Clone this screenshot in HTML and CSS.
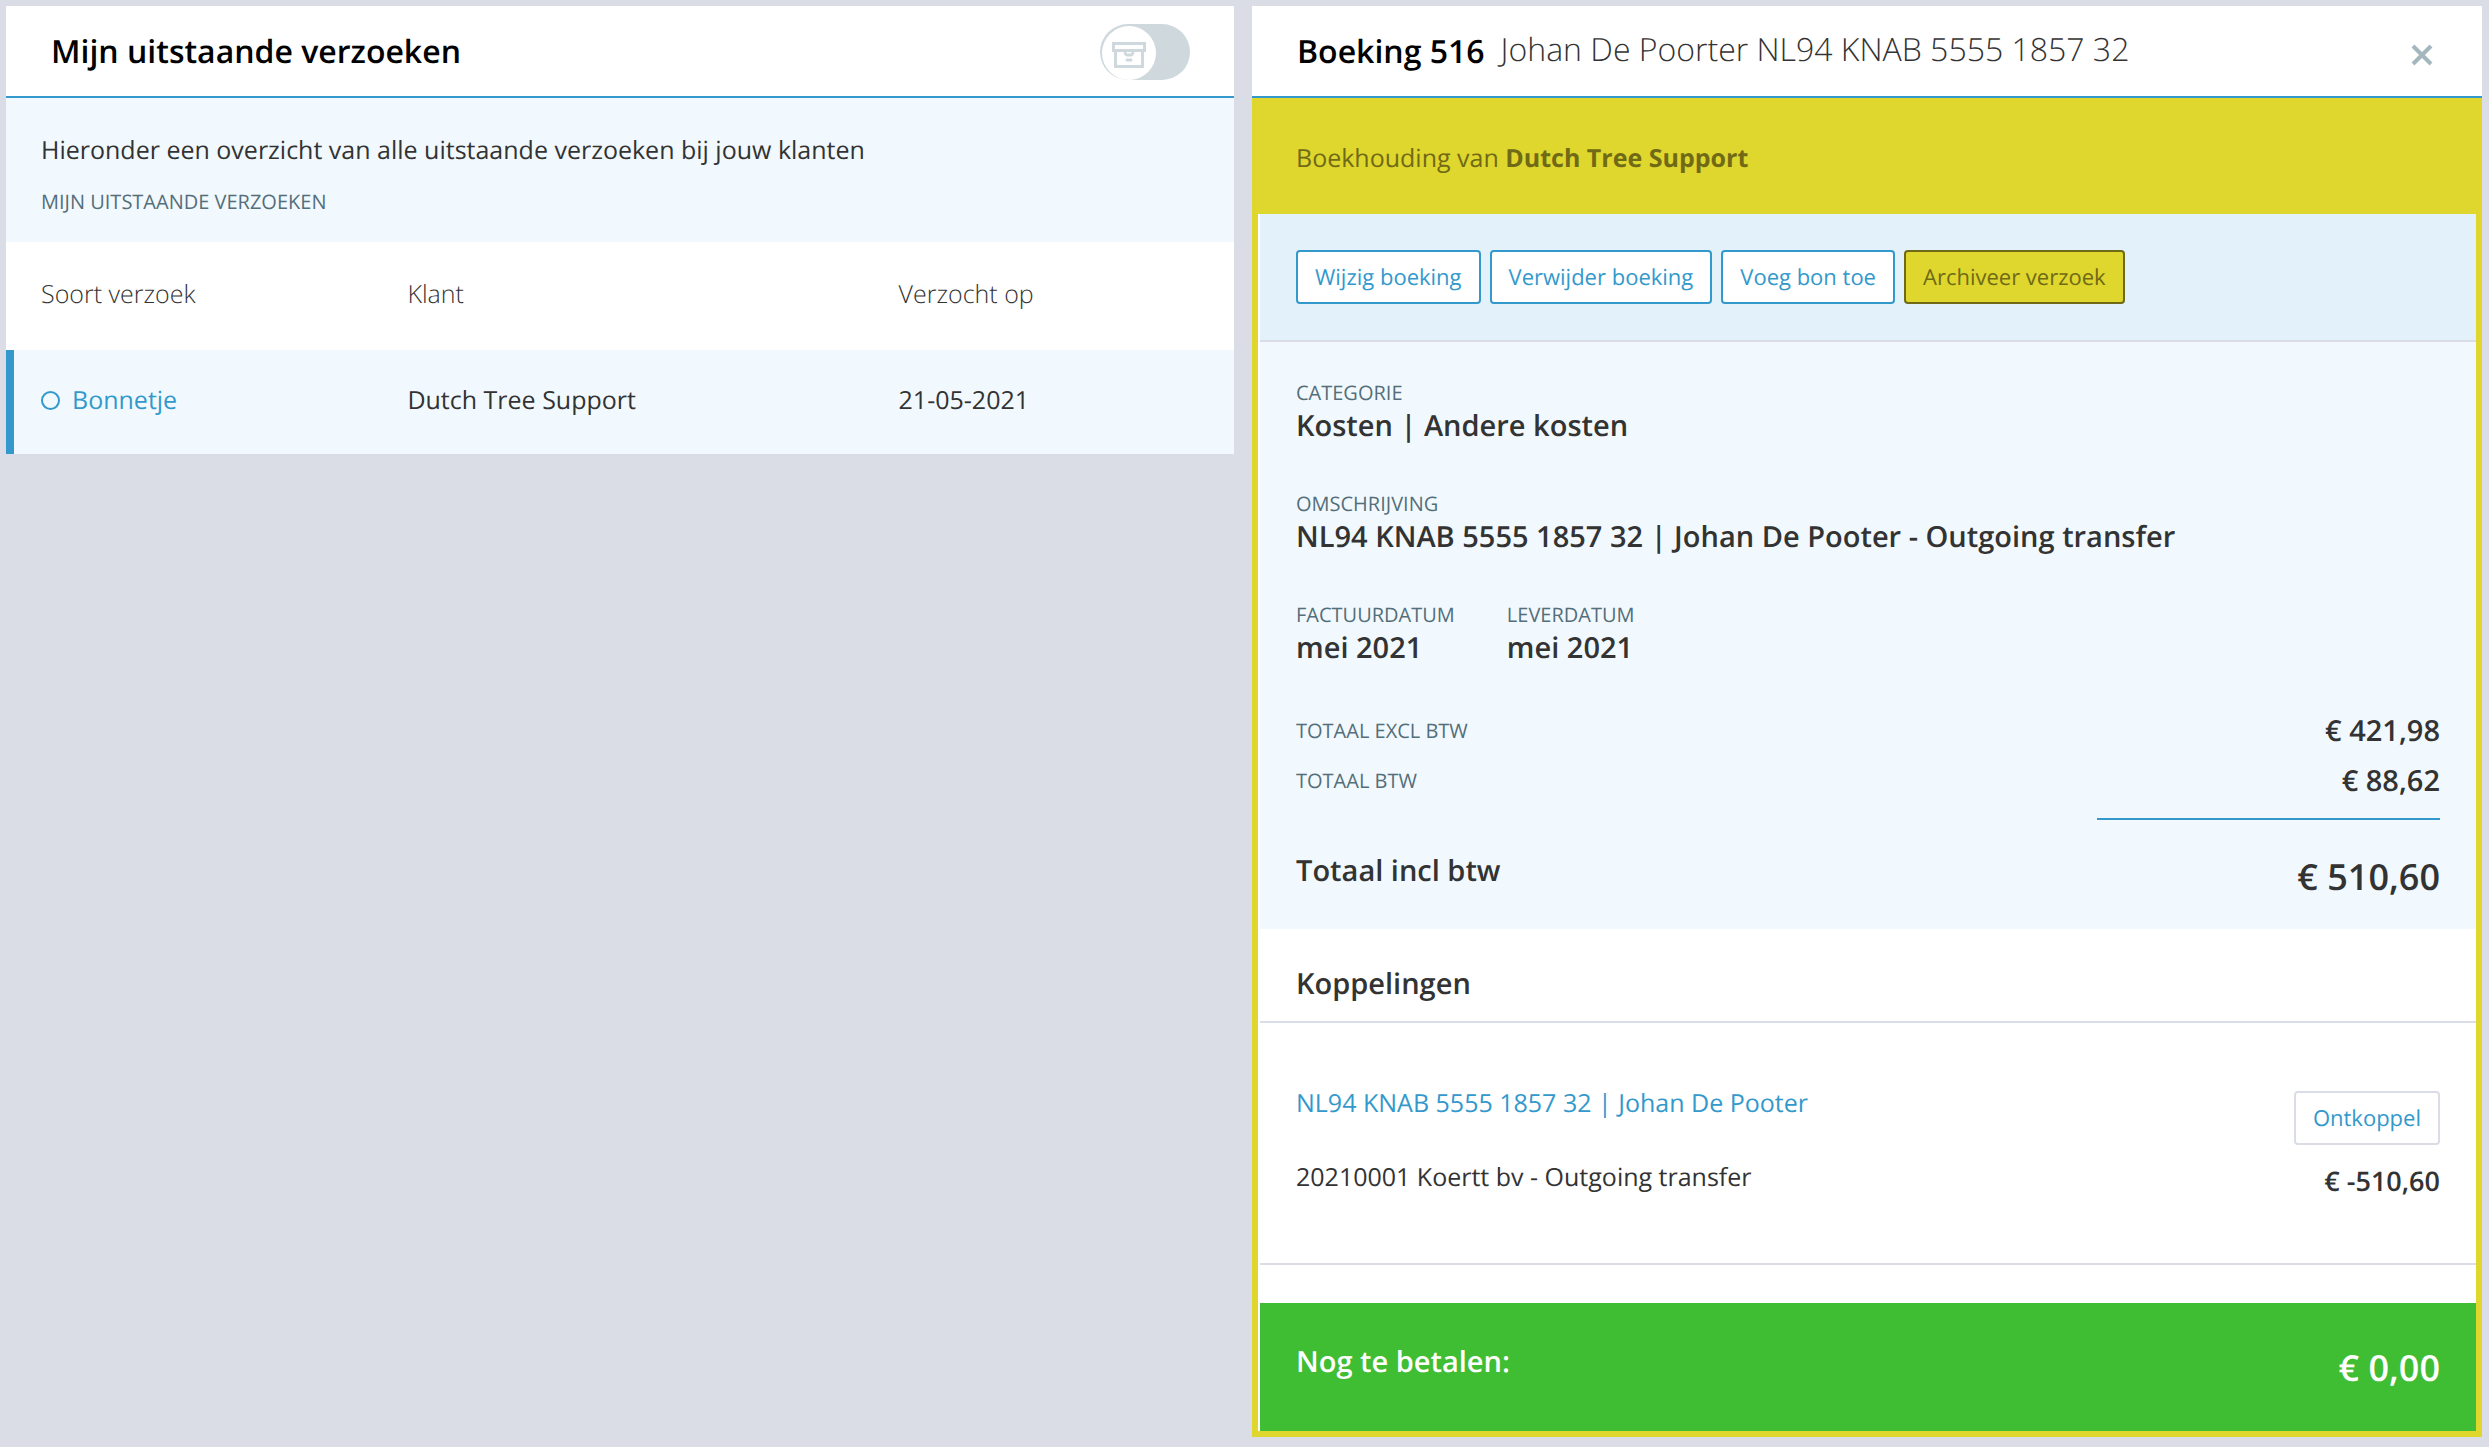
FILE: index.html
```html
<!DOCTYPE html>
<html lang="nl">
<head>
<meta charset="utf-8">
<meta name="viewport" content="width=device-width, initial-scale=1">
<title>Mijn uitstaande verzoeken</title>
<link rel="stylesheet" href="styles.css">
</head>
<body>
<main class="layout">
  <section class="panel">
    <header class="panel-header">
      <h1 class="panel-title">Mijn uitstaande verzoeken</h1>
      <label class="toggle">
        <input class="toggle-input" type="checkbox" aria-label="Toon archief">
        <span class="toggle-knob">
          <svg class="toggle-icon" viewBox="0 0 34 26" aria-hidden="true">
            <g fill="none" stroke="currentColor" stroke-width="3">
              <rect x="1.500" y="1.500" width="31" height="7"/>
              <path d="M3.500 9v15.500h27V9"/>
              <path d="M12 9.500c1 0 1 3.500 3 3.500h4c2 0 2-3.500 3-3.500"/>
              <path d="M15 18h4" stroke-linecap="round"/>
            </g>
          </svg>
        </span>
      </label>
    </header>
    <div class="intro">
      <p class="intro-text">Hieronder een overzicht van alle uitstaande verzoeken bij jouw klanten</p>
      <p class="label">MIJN UITSTAANDE VERZOEKEN</p>
    </div>
    <table class="requests">
      <thead>
        <tr>
          <th class="col-type">Soort verzoek</th>
          <th class="col-client">Klant</th>
          <th>Verzocht op</th>
        </tr>
      </thead>
      <tbody>
        <tr class="selected">
          <td><a class="request-link" href="#bonnetje"><span class="ring"></span>Bonnetje</a></td>
          <td>Dutch Tree Support</td>
          <td>21-05-2021</td>
        </tr>
      </tbody>
    </table>
  </section>

  <section class="panel">
    <header class="panel-header">
      <div class="heading">
        <h2 class="panel-title">Boeking 516</h2>
        <span class="panel-subtitle">Johan De Poorter NL94 KNAB 5555 1857 32</span>
      </div>
      <button class="close" type="button" aria-label="Sluiten">
        <svg class="close-icon" viewBox="0 0 22 22" aria-hidden="true">
          <path d="M2 2l18 18M20 2L2 20" fill="none" stroke="currentColor" stroke-width="4"/>
        </svg>
      </button>
    </header>
    <p class="banner">Boekhouding van <strong>Dutch Tree Support</strong></p>
    <div class="booking">
      <div class="toolbar">
        <button class="button" type="button">Wijzig boeking</button>
        <button class="button" type="button">Verwijder boeking</button>
        <button class="button" type="button">Voeg bon toe</button>
        <button class="button button-archive" type="button">Archiveer verzoek</button>
      </div>
      <div class="details">
        <div class="field">
          <p class="label">CATEGORIE</p>
          <p class="value">Kosten | Andere kosten</p>
        </div>
        <div class="field">
          <p class="label">OMSCHRIJVING</p>
          <p class="value">NL94 KNAB 5555 1857 32 | Johan De Pooter - Outgoing transfer</p>
        </div>
        <div class="dates">
          <div class="field">
            <p class="label">FACTUURDATUM</p>
            <p class="value">mei 2021</p>
          </div>
          <div class="field">
            <p class="label">LEVERDATUM</p>
            <p class="value">mei 2021</p>
          </div>
        </div>
        <div class="totals">
          <div class="total-row">
            <span class="label">TOTAAL EXCL BTW</span>
            <span class="value">€ 421,98</span>
          </div>
          <div class="total-row">
            <span class="label">TOTAAL BTW</span>
            <span class="value">€ 88,62</span>
          </div>
          <hr class="sum-line">
          <div class="grand-row">
            <span class="value">Totaal incl btw</span>
            <span class="grand-amount">€ 510,60</span>
          </div>
        </div>
      </div>
      <h3 class="links-title">Koppelingen</h3>
      <div class="link-item">
        <div class="link-text">
          <a class="link" href="#rekening">NL94 KNAB 5555 1857 32 | Johan De Pooter</a>
          <p>20210001 Koertt bv - Outgoing transfer</p>
        </div>
        <div class="link-side">
          <button class="button button-quiet" type="button">Ontkoppel</button>
          <span class="link-amount">€ -510,60</span>
        </div>
      </div>
      <footer class="due">
        <span class="due-label">Nog te betalen:</span>
        <span class="grand-amount">€ 0,00</span>
      </footer>
    </div>
  </section>
</main>
</body>
</html>
```
FILE: styles.css
```css
* {
  box-sizing: border-box;
}

body {
  margin: 0;
  background: #dadde6;
  color: #333;
  font: 400 25px/36px "Open Sans", sans-serif;
  text-rendering: geometricPrecision;
}

h1, h2, h3, p {
  margin: 0;
}

a {
  color: #3399cc;
  text-decoration: none;
}

.layout {
  display: grid;
  grid-template-columns: 1228fr 1230fr;
  gap: 18px;
  align-items: start;
  padding: 6px 7px 6px 6px;
}

.panel {
  background: #fff;
}

.panel-header {
  display: flex;
  align-items: center;
  justify-content: space-between;
  height: 92px;
  padding: 2px 44px 0 45px;
  border-bottom: 2px solid #3399cc;
}

.heading {
  display: flex;
  align-items: flex-start;
  gap: 16px;
}

.panel-title {
  color: #000;
  font-size: 32px;
  font-weight: 600;
  line-height: 44px;
}

.panel-subtitle {
  font-size: 32px;
  font-weight: 300;
  line-height: 40px;
}

.toggle {
  display: block;
  width: 90px;
  height: 56px;
  padding: 2px 0 0 2px;
  border-radius: 28px;
  background: #cfd8dc;
  cursor: pointer;
}

.toggle-input {
  position: absolute;
  opacity: 0;
}

.toggle-knob {
  display: flex;
  align-items: center;
  justify-content: center;
  width: 54px;
  height: 54px;
  padding-top: 4px;
  border-radius: 50%;
  background: #fff;
  color: #cfd8dc;
}

.toggle-input:checked + .toggle-knob {
  margin-left: 34px;
}

.toggle-icon {
  width: 34px;
  height: 26px;
}

.close {
  display: flex;
  align-items: center;
  justify-content: center;
  width: 32px;
  height: 32px;
  margin-top: 6px;
  padding: 0;
  border: 0;
  background: none;
  color: #a4b7be;
  cursor: pointer;
}

.close-icon {
  width: 22px;
  height: 22px;
}

.intro {
  padding: 34px 35px 26px;
  background: #f1f9fe;
}

.intro-text {
  margin-bottom: 20px;
}

.label {
  color: #546e7a;
  font-size: 20px;
  line-height: 28px;
}

.requests {
  width: 100%;
  border-collapse: collapse;
  table-layout: fixed;
  text-align: left;
}

.col-type {
  width: 30%;
}

.col-client {
  width: 40%;
}

.requests th {
  padding: 34px 0 38px 33px;
  font-weight: 300;
}

.requests td {
  padding: 32px 0 36px 33px;
}

.requests th:first-child,
.requests td:first-child {
  padding-left: 35px;
}

.selected {
  background: #f1f9fe;
  box-shadow: inset 8px 0 #3399cc;
}

.request-link {
  display: flex;
  align-items: center;
  gap: 12px;
}

.ring {
  width: 19px;
  height: 19px;
  border: 2px solid #3399cc;
  border-radius: 50%;
}

.banner {
  padding: 42px 44px 38px;
  background: #dfd72e;
  color: #706a16;
}

.banner strong {
  font-weight: 700;
}

.booking {
  padding-left: 2px;
  border: 6px solid #dfd72e;
  border-top: 0;
}

.toolbar {
  display: flex;
  gap: 9px;
  padding: 36px;
  border-bottom: 2px solid #dadde6;
  background: #e3f1fb;
}

.button {
  height: 54px;
  padding: 0 17px;
  border: 2px solid #3399cc;
  border-radius: 4px;
  background: #fff;
  color: #3399cc;
  font: 400 22px/30px "Open Sans", sans-serif;
  text-rendering: geometricPrecision;
  cursor: pointer;
}

.button-archive {
  border-color: #706a16;
  background: #dfd72e;
  color: #706a16;
}

.button-quiet {
  border-color: #dadde6;
}

.details {
  display: flex;
  flex-direction: column;
  gap: 45px;
  padding: 37px 36px 27px;
  background: #f1f9fe;
}

.value {
  font-size: 29px;
  font-weight: 600;
  line-height: 38px;
}

.dates {
  display: flex;
  gap: 52px;
}

.totals {
  display: flex;
  flex-direction: column;
  gap: 12px;
}

.total-row {
  display: flex;
  align-items: center;
  justify-content: space-between;
}

.sum-line {
  width: 30%;
  height: 2px;
  margin: 6px 0 20px auto;
  border: 0;
  background: #3399cc;
}

.grand-row {
  display: flex;
  align-items: flex-start;
  justify-content: space-between;
}

.grand-amount {
  font-size: 36px;
  font-weight: 600;
  line-height: 50px;
}

.links-title {
  padding: 36px 36px 18px;
  border-bottom: 2px solid #dadde6;
  font-size: 29px;
  font-weight: 600;
  line-height: 38px;
}

.link-item {
  display: flex;
  justify-content: space-between;
  padding: 62px 36px 64px;
  border-bottom: 2px solid #dadde6;
}

.link-text {
  display: flex;
  flex-direction: column;
  gap: 38px;
}

.link-side {
  display: flex;
  flex-direction: column;
  align-items: flex-end;
  gap: 18px;
  padding-top: 6px;
}

.link-amount {
  font-size: 27px;
  font-weight: 600;
}

.due {
  display: flex;
  align-items: flex-start;
  justify-content: space-between;
  margin-top: 38px;
  padding: 40px 36px 38px;
  background: #3fbd33;
  color: #fff;
}

.due-label {
  font-size: 29px;
  font-weight: 600;
  line-height: 38px;
}
```
